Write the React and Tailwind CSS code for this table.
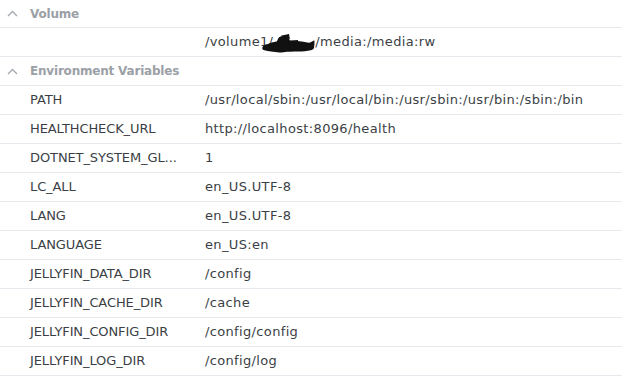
import React from "react";

const envVars = [
  ["PATH", "/usr/local/sbin:/usr/local/bin:/usr/sbin:/usr/bin:/sbin:/bin"],
  ["HEALTHCHECK_URL", "http://localhost:8096/health"],
  ["DOTNET_SYSTEM_GL...", "1"],
  ["LC_ALL", "en_US.UTF-8"],
  ["LANG", "en_US.UTF-8"],
  ["LANGUAGE", "en_US:en"],
  ["JELLYFIN_DATA_DIR", "/config"],
  ["JELLYFIN_CACHE_DIR", "/cache"],
  ["JELLYFIN_CONFIG_DIR", "/config/config"],
  ["JELLYFIN_LOG_DIR", "/config/log"],
];

const Chevron = () => (
  <svg width="11" height="7" viewBox="0 0 11 7" className="shrink-0">
    <polyline points="1,6 5.5,1.5 10,6" fill="none" stroke="#a3a8ae" strokeWidth="1.3" />
  </svg>
);

const SectionHeader = ({ title, first }) => (
  <div
    className={`flex items-center border-b border-[#e6e9ee] pl-[7px] ${
      first ? "h-[28px]" : "h-[29px]"
    }`}
  >
    <Chevron />
    <span className="ml-3 text-[12px] font-bold tracking-[-0.2px] text-[#9ba0a6]">{title}</span>
  </div>
);

const Row = ({ name, value }) => (
  <div className="flex h-[29px] items-center border-b border-[#e6e9ee] text-[#3b3f45]">
    <div className="w-[205px] shrink-0 pl-[30px] tracking-[-0.1px]">{name}</div>
    <div className="truncate tracking-[0.35px]">{value}</div>
  </div>
);

export default function App() {
  return (
    <div
      className="h-[378px] w-[622px] overflow-hidden bg-white text-[13px]"
      style={{ fontFamily: '"DejaVu Sans", Verdana, sans-serif' }}
    >
      <SectionHeader title="Volume" first />
      <div className="flex h-[29px] items-center border-b border-[#e6e9ee] text-[#3b3f45]">
        <div className="w-[205px] shrink-0" />
        <div className="flex items-center tracking-[0.35px]">
          <span>/volume1/</span>
          <span className="relative inline-block h-[15px] w-[42px]">
            {/* redaction scribble */}
            <svg
              width="56"
              height="20"
              viewBox="0 0 60 22"
              className="absolute -left-[12px] -top-[1px]"
            >
              <path
                d="M2 13 C6 10 12 11 16 10 L18 5 C20 2 25 1 28 3 C30 5 30 7 32 8 C40 7 48 9 54 10 C59 12 59 17 54 18 C46 20 34 19 24 20 C16 21 8 19 3 18 C0 17 0 15 2 13 Z"
                fill="#111"
              />
              <path d="M21 2 L30 0 L31 6 Z" fill="#111" />
              <path d="M50 11 L58 7 L58 13 Z" fill="#111" />
              <path d="M8 12 C16 8 30 9 40 8" stroke="#111" strokeWidth="3" fill="none" />
            </svg>
          </span>
          <span>/media:/media:rw</span>
        </div>
      </div>
      <SectionHeader title="Environment Variables" />
      {envVars.map(([name, value]) => (
        <Row key={name} name={name} value={value} />
      ))}
    </div>
  );
}
